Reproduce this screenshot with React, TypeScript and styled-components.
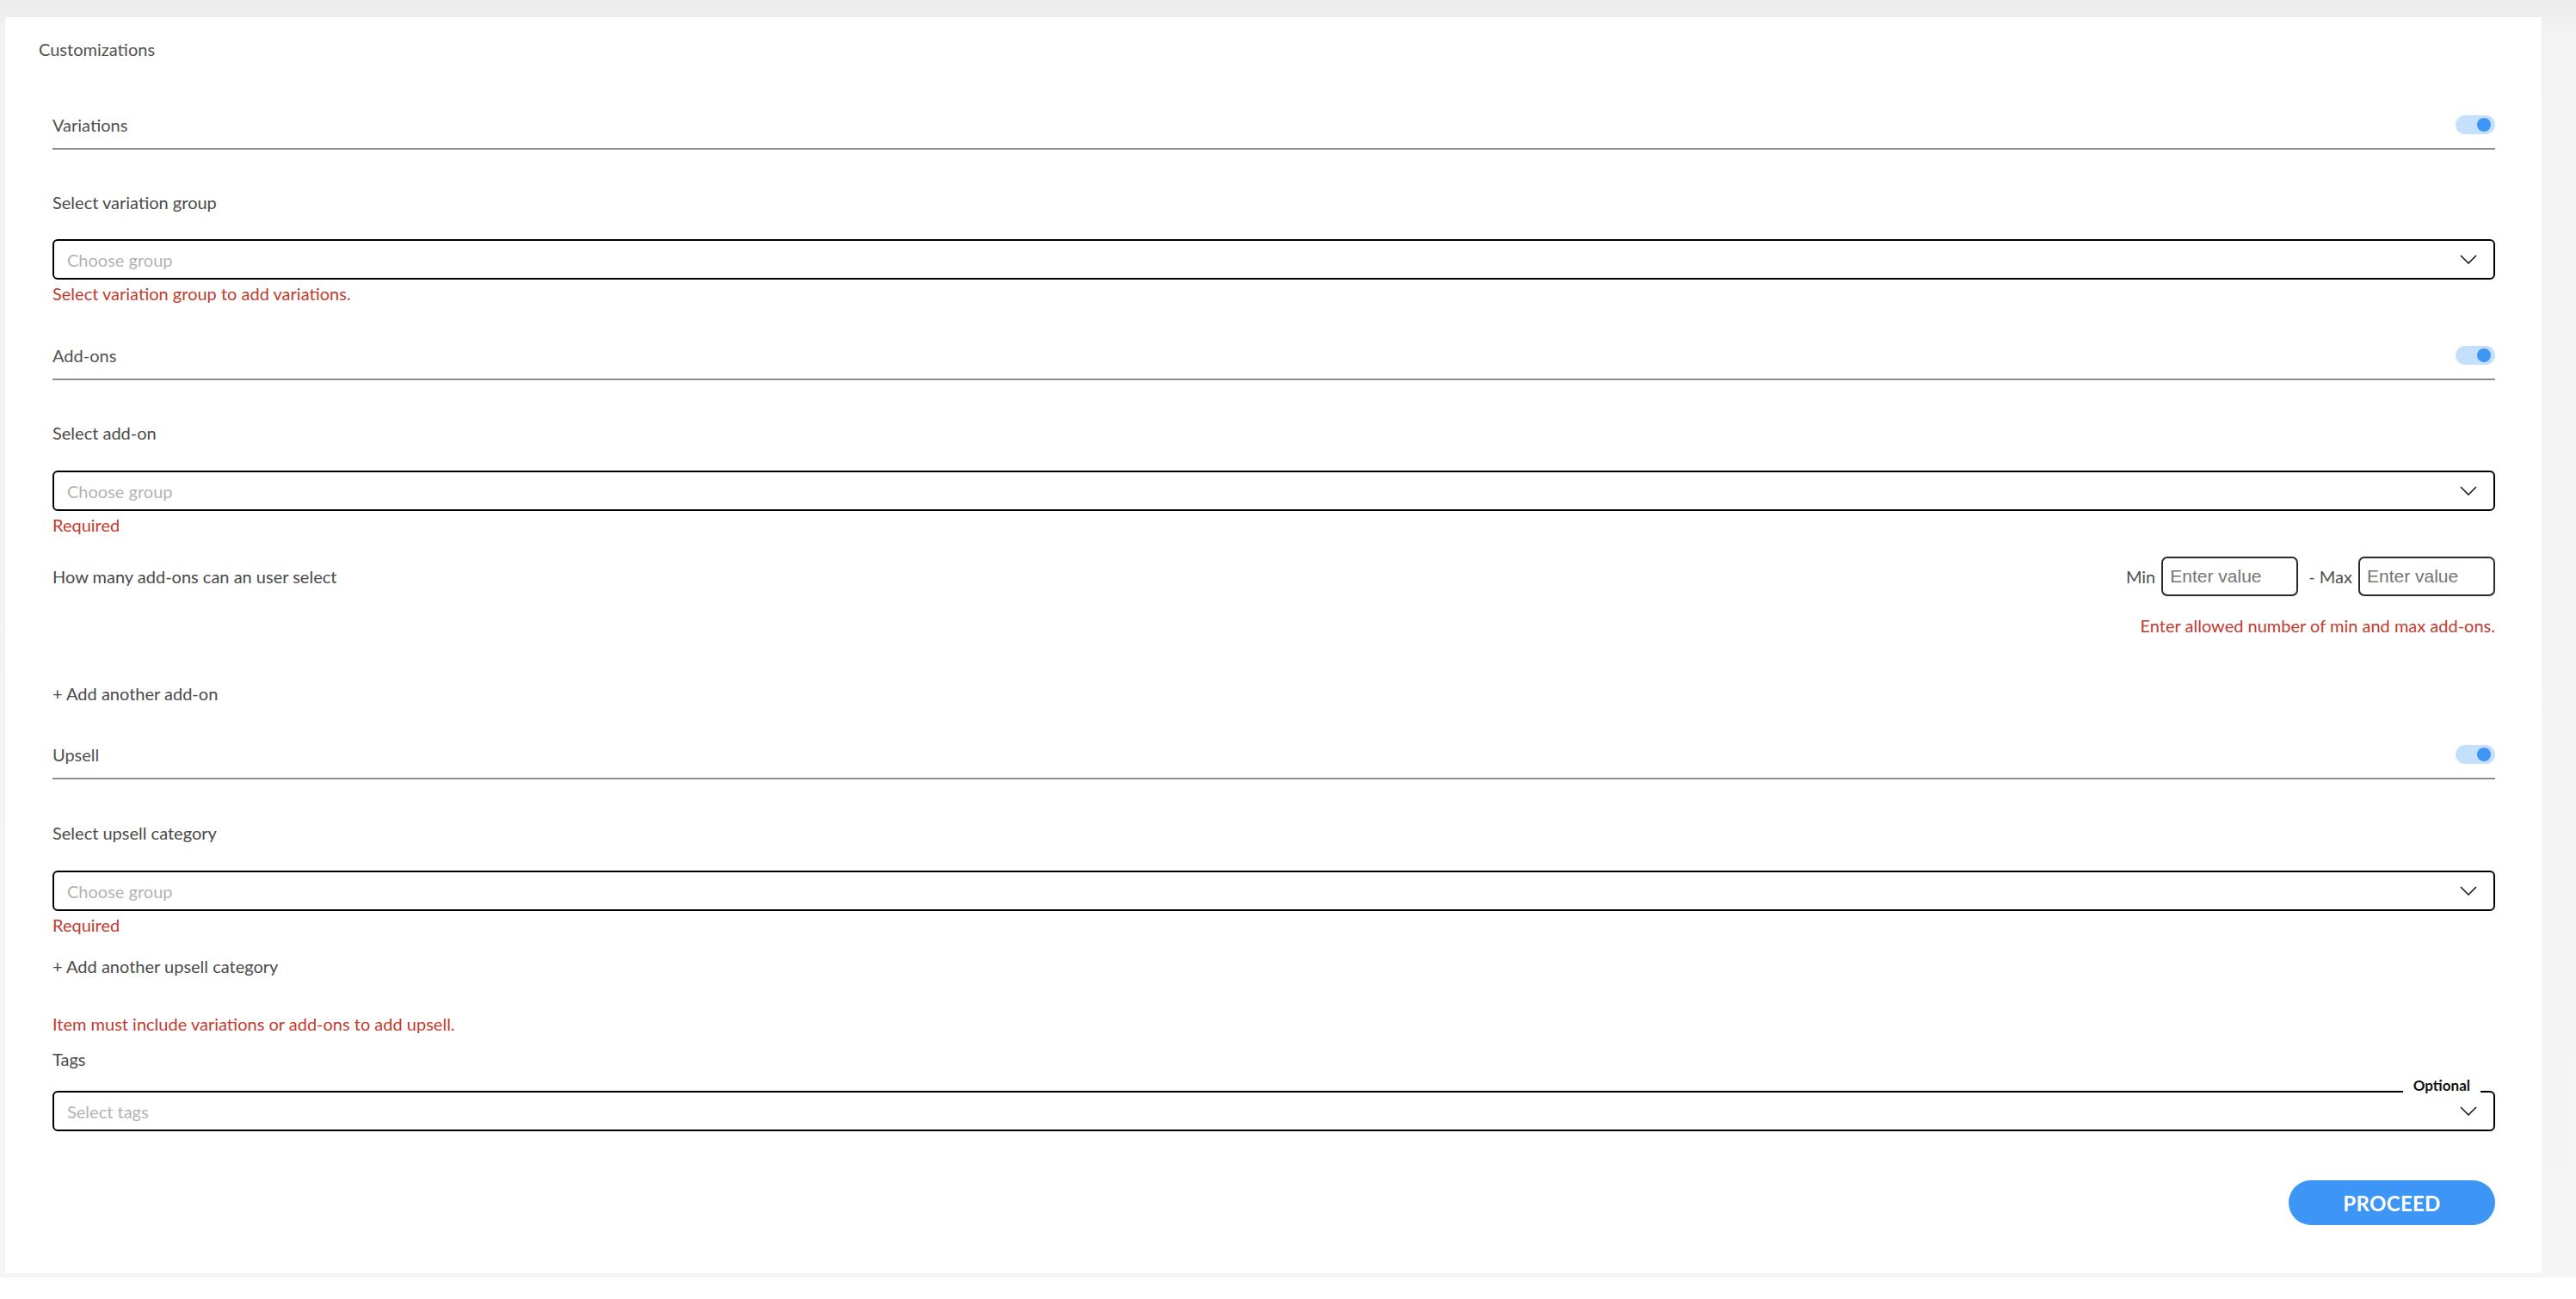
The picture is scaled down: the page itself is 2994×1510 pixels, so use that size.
import React from "react";
import styled, { createGlobalStyle } from "styled-components";

const Global = createGlobalStyle`
  html, body { margin: 0; padding: 0; background: #ffffff; }
  body { font-family: Lato, "Noto Sans", sans-serif; }
  * { box-sizing: border-box; }
`;

const Page = styled.div`
  padding: 20px 40px 5px 6px;
  background: linear-gradient(180deg, #ececec 0px, #f3f3f3 40px, #f5f5f5 100%);
`;

const Card = styled.div`
  background: #ffffff;
  padding: 25px 54px 56px 39px;
  box-shadow: 0 0 2px rgba(0, 0, 0, 0.04);
`;

const Title = styled.div`
  font-size: 20px;
  line-height: 24px;
  color: #505050;
`;

const Content = styled.div`
  margin-left: 16px;
  display: flex;
  flex-direction: column;
`;

const SectionHeader = styled.div<{ $mt: number }>`
  margin-top: ${(p) => p.$mt}px;
  display: flex;
  align-items: center;
  justify-content: space-between;
  padding-bottom: 15px;
  border-bottom: 2px solid #8e8e8e;
`;

const HeaderText = styled.span`
  font-size: 20px;
  line-height: 24px;
  color: #505050;
`;

const Toggle = styled.div`
  width: 46px;
  height: 22px;
  border-radius: 11px;
  background: #c5e0fc;
  display: flex;
  align-items: center;
  justify-content: flex-end;
  padding-right: 5px;
`;

const Knob = styled.span`
  width: 16px;
  height: 16px;
  border-radius: 50%;
  background: #3d96f5;
`;

const Label = styled.div<{ $mt?: number }>`
  margin-top: ${(p) => p.$mt ?? 0}px;
  font-size: 20px;
  line-height: 24px;
  color: #4a4a4a;
`;

const Box = styled.div<{ $mt?: number }>`
  position: relative;
  margin-top: ${(p) => p.$mt ?? 0}px;
  height: 47px;
  border: 2px solid #000000;
  border-radius: 6px;
  display: flex;
  align-items: center;
  justify-content: space-between;
  padding: 0 19px 0 15px;
`;

const Placeholder = styled.span`
  font-size: 20px;
  color: #b3b3b3;
`;

const OptionalTag = styled.span`
  position: absolute;
  top: -18px;
  right: 15px;
  background: #ffffff;
  padding: 0 12px;
  font-size: 17px;
  line-height: 20px;
  font-weight: 700;
  color: #111111;
`;

const ErrorText = styled.div<{ $mt?: number; $right?: boolean }>`
  margin-top: ${(p) => p.$mt ?? 0}px;
  font-size: 20px;
  line-height: 22px;
  color: #c23b2e;
  text-align: ${(p) => (p.$right ? "right" : "left")};
`;

const LinkText = styled.div<{ $mt: number }>`
  margin-top: ${(p) => p.$mt}px;
  font-size: 20px;
  line-height: 24px;
  color: #4a4a4a;
`;

const RangeRow = styled.div<{ $mt: number }>`
  margin-top: ${(p) => p.$mt}px;
  display: flex;
  align-items: center;
  justify-content: space-between;
  height: 46px;
`;

const RangeInputs = styled.div`
  display: flex;
  align-items: center;
  gap: 7px;
`;

const RangeLabel = styled.span<{ $ml?: number }>`
  margin-left: ${(p) => p.$ml ?? 0}px;
  font-size: 20px;
  color: #505050;
`;

const NumInput = styled.input`
  width: 159px;
  height: 46px;
  border: 2px solid #2a2a2a;
  border-radius: 7px;
  padding: 0 8px;
  font-family: "Liberation Sans", Arial, sans-serif;
  font-size: 21px;
  color: #333;
  outline: none;
  &::placeholder { color: #757575; }
`;

const Footer = styled.div`
  margin-top: 57px;
  display: flex;
  justify-content: flex-end;
`;

const Proceed = styled.button`
  width: 240px;
  height: 52px;
  border: none;
  border-radius: 26px;
  background: #3d96f5;
  color: #ffffff;
  font-family: Lato, "Noto Sans", sans-serif;
  font-size: 24px;
  font-weight: 700;
  letter-spacing: 0.3px;
  cursor: pointer;
`;

const Chevron = () => (
  <svg width="20" height="11" viewBox="0 0 20 11" fill="none">
    <polyline points="1,1 10,10 19,1" stroke="#1a1a1a" strokeWidth="1.6" strokeLinejoin="miter" />
  </svg>
);

const Select = ({ text, mt, optional }: { text: string; mt?: number; optional?: boolean }) => (
  <Box $mt={mt}>
    {optional && <OptionalTag>Optional</OptionalTag>}
    <Placeholder>{text}</Placeholder>
    <Chevron />
  </Box>
);

const Header = ({ title, mt }: { title: string; mt: number }) => (
  <SectionHeader $mt={mt}>
    <HeaderText>{title}</HeaderText>
    <Toggle>
      <Knob />
    </Toggle>
  </SectionHeader>
);

export default function App() {
  return (
    <>
      <Global />
      <Page>
        <Card>
          <Title>Customizations</Title>
          <Content>
            <Header title="Variations" mt={64} />
            <Label $mt={49}>Select variation group</Label>
            <Select text="Choose group" mt={31} />
            <ErrorText $mt={5}>Select variation group to add variations.</ErrorText>

            <Header title="Add-ons" mt={49} />
            <Label $mt={49}>Select add-on</Label>
            <Select text="Choose group" mt={32} />
            <ErrorText $mt={5}>Required</ErrorText>

            <RangeRow $mt={26}>
              <Label>How many add-ons can an user select</Label>
              <RangeInputs>
                <RangeLabel>Min</RangeLabel>
                <NumInput placeholder="Enter value" />
                <RangeLabel $ml={5}>- Max</RangeLabel>
                <NumInput placeholder="Enter value" />
              </RangeInputs>
            </RangeRow>
            <ErrorText $mt={23} $right>
              Enter allowed number of min and max add-ons.
            </ErrorText>

            <LinkText $mt={56}>+ Add another add-on</LinkText>

            <Header title="Upsell" mt={47} />
            <Label $mt={50}>Select upsell category</Label>
            <Select text="Choose group" mt={32} />
            <ErrorText $mt={5}>Required</ErrorText>

            <LinkText $mt={25}>+ Add another upsell category</LinkText>

            <ErrorText $mt={44}>Item must include variations or add-ons to add upsell.</ErrorText>
            <Label $mt={18}>Tags</Label>
            <Select text="Select tags" mt={25} optional />

            <Footer>
              <Proceed>PROCEED</Proceed>
            </Footer>
          </Content>
        </Card>
      </Page>
    </>
  );
}
